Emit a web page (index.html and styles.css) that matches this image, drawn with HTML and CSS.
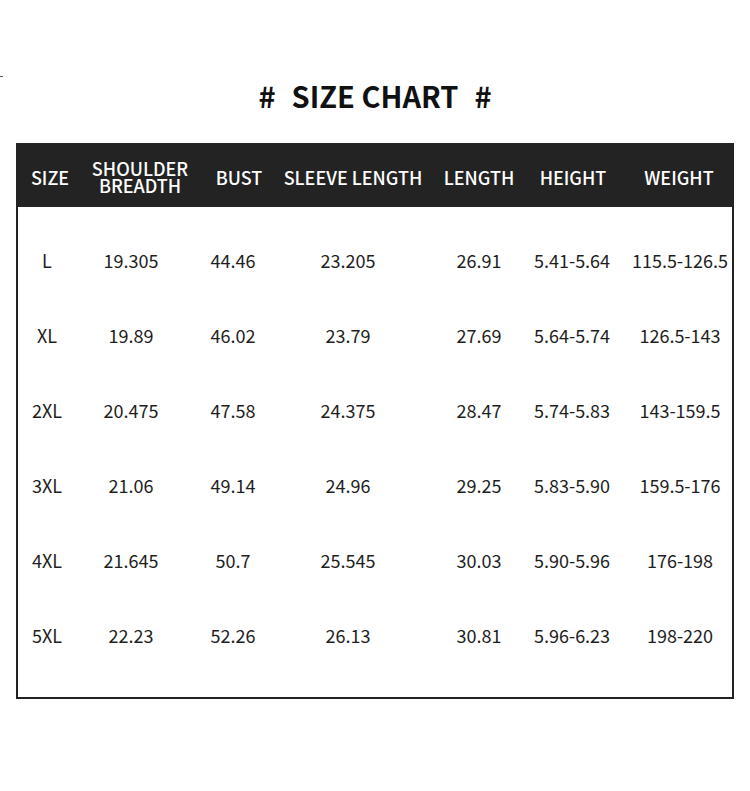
FILE: index.html
```html
<!DOCTYPE html>
<html>
<head>
<meta charset="utf-8">
<link rel="stylesheet" href="styles.css">
</head>
<body>
<div class="page">
  <span class="mark"></span>
  <h1 class="title"><span>#</span><span>SIZE CHART</span><span>#</span></h1>
  <div class="chart">
    <div class="head">
      <div class="cell">SIZE</div>
      <div class="cell two">SHOULDER<br>BREADTH</div>
      <div class="cell">BUST</div>
      <div class="cell">SLEEVE LENGTH</div>
      <div class="cell">LENGTH</div>
      <div class="cell">HEIGHT</div>
      <div class="cell">WEIGHT</div>
    </div>
    <div class="rows">
      <div class="row"><div class="cell">L</div><div class="cell">19.305</div><div class="cell">44.46</div><div class="cell">23.205</div><div class="cell">26.91</div><div class="cell">5.41-5.64</div><div class="cell">115.5-126.5</div></div>
      <div class="row"><div class="cell">XL</div><div class="cell">19.89</div><div class="cell">46.02</div><div class="cell">23.79</div><div class="cell">27.69</div><div class="cell">5.64-5.74</div><div class="cell">126.5-143</div></div>
      <div class="row"><div class="cell">2XL</div><div class="cell">20.475</div><div class="cell">47.58</div><div class="cell">24.375</div><div class="cell">28.47</div><div class="cell">5.74-5.83</div><div class="cell">143-159.5</div></div>
      <div class="row"><div class="cell">3XL</div><div class="cell">21.06</div><div class="cell">49.14</div><div class="cell">24.96</div><div class="cell">29.25</div><div class="cell">5.83-5.90</div><div class="cell">159.5-176</div></div>
      <div class="row"><div class="cell">4XL</div><div class="cell">21.645</div><div class="cell">50.7</div><div class="cell">25.545</div><div class="cell">30.03</div><div class="cell">5.90-5.96</div><div class="cell">176-198</div></div>
      <div class="row"><div class="cell">5XL</div><div class="cell">22.23</div><div class="cell">52.26</div><div class="cell">26.13</div><div class="cell">30.81</div><div class="cell">5.96-6.23</div><div class="cell">198-220</div></div>
    </div>
  </div>
</div>
</body>
</html>
```
FILE: styles.css
```css
html, body {
  margin: 0;
  padding: 0;
  background: #ffffff;
}
.page {
  position: relative;
  width: 750px;
  height: 791px;
  padding-top: 75px;
  box-sizing: border-box;
  font-family: "Noto Sans CJK SC", "Noto Sans", sans-serif;
  color: #1e1e1e;
}
.mark {
  position: absolute;
  left: 0;
  top: 76px;
  width: 3px;
  height: 1px;
  background: #555;
}
.title {
  margin: 0 0 28px 0;
  height: 40px;
  display: flex;
  justify-content: center;
  align-items: center;
  gap: 16px;
  font-size: 29px;
  font-weight: 700;
  line-height: 40px;
  color: #111;
}
.chart {
  margin-left: 16px;
  width: 718px;
  box-sizing: border-box;
  border: 2px solid #222;
  border-top: none;
}
.head {
  height: 64px;
  margin: 0 -2px;
  padding: 4px 2px 0 2px;
  box-sizing: border-box;
  background: #232323;
  color: #ffffff;
  display: grid;
  grid-template-columns: 64px 116px 82px 146px 106px 82px 130px;
  align-items: center;
  font-size: 18px;
  font-weight: 500;
  line-height: 18px;
}
.head .cell, .row .cell {
  display: flex;
  justify-content: center;
  text-align: center;
  white-space: nowrap;
}
.head .two {
  display: block;
  line-height: 17px;
}
.rows {
  padding: 15px 0 25px 0;
}
.row {
  height: 75px;
  display: grid;
  grid-template-columns: 58px 110px 94px 136px 126px 60px 156px;
  align-items: center;
  font-size: 18px;
  line-height: 18px;
}
```
